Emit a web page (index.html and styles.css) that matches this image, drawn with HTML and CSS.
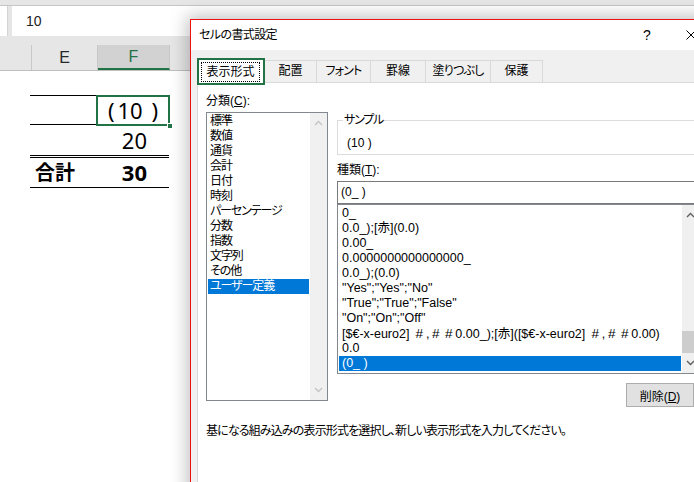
FILE: index.html
```html
<!DOCTYPE html>
<html lang="ja">
<head>
<meta charset="utf-8">
<title>セルの書式設定</title>
<link rel="stylesheet" href="styles.css">
</head>
<body>
<div class="app">
  <div class="excel">
    <div class="topband"></div>
    <div class="fbar">
      <div class="namebox"></div>
      <div class="finput">10</div>
    </div>
    <div class="gapband"></div>
    <div class="colheads">
      <div class="colhead col-d"></div>
      <div class="colhead col-e">E</div>
      <div class="colhead col-f">F</div>
      <div class="colhead col-rest"></div>
    </div>
    <div class="sheet">
      <div class="cell cd r1"></div>
      <div class="cell ce r1"></div>
      <div class="cell cf r1 active num"><span class="lp">(</span>10<span class="sp"> </span>)<span class="handle"></span></div>
      <div class="cell cd r2"></div>
      <div class="cell ce r2"></div>
      <div class="cell cf r2 num">20</div>
      <div class="cell cd r3"></div>
      <div class="cell ce r3 label">合計</div>
      <div class="cell cf r3 num bold">30</div>
    </div>
  </div>

  <div class="dialog">
    <div class="titlebar">
      <span class="title">セルの書式設定</span>
      <div class="tb-buttons">
        <span class="tb-btn help">?</span>
        <span class="tb-btn close"><svg width="10" height="10" viewBox="0 0 10 10"><path d="M0.5 0.5 L9.5 9.5 M9.5 0.5 L0.5 9.5" stroke="#000" stroke-width="1" fill="none"/></svg></span>
      </div>
    </div>
    <div class="dlg-body">
      <div class="tabs">
        <div class="tab active t1"><span class="focus">表示形式</span></div>
        <div class="tab t2">配置</div>
        <div class="tab t3">フォント</div>
        <div class="tab t4">罫線</div>
        <div class="tab t5">塗りつぶし</div>
        <div class="tab t6">保護</div>
      </div>
      <div class="panel">
        <div class="top-row">
          <div class="cat-col">
            <div class="lbl">分類(<u>C</u>):</div>
            <div class="listbox cat-list">
              <div class="items">
                <div class="item">標準</div>
                <div class="item">数値</div>
                <div class="item">通貨</div>
                <div class="item">会計</div>
                <div class="item">日付</div>
                <div class="item">時刻</div>
                <div class="item">パーセンテージ</div>
                <div class="item">分数</div>
                <div class="item">指数</div>
                <div class="item">文字列</div>
                <div class="item">その他</div>
                <div class="item selected">ユーザー定義</div>
              </div>
              <div class="vscroll disabled">
                <div class="arrow"><svg width="9" height="6" viewBox="0 0 9 6"><path d="M1 5 L4.5 1.5 L8 5" fill="none" stroke="#c4c4c4" stroke-width="1.4"/></svg></div>
                <div class="track"></div>
                <div class="arrow"><svg width="9" height="6" viewBox="0 0 9 6"><path d="M1 1 L4.5 4.5 L8 1" fill="none" stroke="#c4c4c4" stroke-width="1.4"/></svg></div>
              </div>
            </div>
          </div>
          <div class="fmt-col">
            <fieldset class="sample-box">
              <legend>サンプル</legend>
              <div class="sample">(10 )</div>
            </fieldset>
            <div class="lbl type-lbl">種類(<u>T</u>):</div>
            <div class="textbox">(0_ )</div>
            <div class="listbox type-list">
              <div class="items">
                <div class="item">0_</div>
                <div class="item">0.0_);[赤](0.0)</div>
                <div class="item">0.00_</div>
                <div class="item">0.0000000000000000_</div>
                <div class="item">0.0_);(0.0)</div>
                <div class="item">"Yes";"Yes";"No"</div>
                <div class="item">"True";"True";"False"</div>
                <div class="item">"On";"On";"Off"</div>
                <div class="item">[$€-x-euro2] <span class="h">#</span>,<span class="h">#</span><span class="h">#</span>0.00_);[赤]([$€-x-euro2] <span class="h">#</span>,<span class="h">#</span><span class="h">#</span>0.00)</div>
                <div class="item">0.0</div>
                <div class="item selected">(0_ )</div>
              </div>
              <div class="vscroll">
                <div class="arrow"><svg width="9" height="6" viewBox="0 0 9 6"><path d="M1 5 L4.5 1.5 L8 5" fill="none" stroke="#606060" stroke-width="1.4"/></svg></div>
                <div class="track"><div class="thumb"></div></div>
                <div class="arrow"><svg width="9" height="6" viewBox="0 0 9 6"><path d="M1 1 L4.5 4.5 L8 1" fill="none" stroke="#606060" stroke-width="1.4"/></svg></div>
              </div>
            </div>
            <button class="btn">削除(<u>D</u>)</button>
          </div>
        </div>
        <div class="desc">基になる組み込みの表示形式を選択し、新しい表示形式を入力してください。</div>
      </div>
    </div>
  </div>
</div>
</body>
</html>
```

FILE: styles.css
```css
* { box-sizing: border-box; }
html, body { margin: 0; padding: 0; }
body {
  width: 694px;
  height: 482px;
  overflow: hidden;
  background: #fff;
  color: #000;
  font-family: "Liberation Sans", "Noto Sans CJK JP", sans-serif;
}
.app { position: relative; width: 694px; height: 482px; overflow: hidden; }

/* ---------- Excel background ---------- */
.topband { height: 6px; background: #e6e6e6; border-bottom: 1px solid #c6c6c6; }
.fbar { display: flex; height: 30px; background: #e6e6e6; }
.namebox { width: 8px; background: #fff; border-right: 1px solid #d4d4d4; }
.finput {
  flex: 1;
  margin-left: 4px;
  background: #fff;
  padding-left: 14px;
  font: 14px/30px "Liberation Sans", sans-serif;
  color: #222;
}
.gapband { height: 9px; background: #e6e6e6; }
.colheads {
  display: flex;
  height: 26px;
  background: #e6e6e6;
  border-bottom: 1px solid #bfbfbf;
}
.colhead {
  font: 16px/25px "Liberation Sans", sans-serif;
  text-align: center;
  color: #262626;
  border-right: 1px solid #c8c8c8;
}
.col-d { width: 32px; }
.col-e { width: 66px; }
.col-f {
  width: 72px;
  background: #d2d2d2;
  color: #217346;
  border-bottom: 2px solid #217346;
  line-height: 23px;
}
.col-rest { flex: 1; border-right: none; }

.sheet {
  display: grid;
  grid-template-columns: 30px 67px 72px;
  padding-top: 24px;
}
.cell {
  font-family: "Noto Sans", sans-serif;
  font-size: 22px;
  white-space: pre;
}
.r1 { height: 29px; line-height: 28px; }
.r2 { height: 34px; line-height: 30px; }
.r3 { height: 30px; line-height: 28px; }
.ce.r1, .cf.r1 { border-top: 1px solid #000; }
.ce.r2, .cf.r2 { border-top: 1px solid #000; border-bottom: 3px double #000; }
.ce.r3, .cf.r3 { border-bottom: 1px solid #000; }
.num { text-align: right; padding-right: 22px; }
.cf.r1 { padding-right: 11px; }
.lp { margin-right: 3px; }
.sp { margin-right: 3px; }
.bold { font-weight: 700; }
.label {
  font-family: "Noto Sans CJK JP", sans-serif;
  font-weight: 700;
  font-size: 20px;
  padding-left: 5px;
}
.active { position: relative; }
.active::after {
  content: "";
  position: absolute;
  top: -1px; left: -1px; right: -1px; bottom: -2px;
  border: 2px solid #217346;
}
.handle {
  position: absolute;
  right: -4px;
  bottom: -5px;
  width: 6px;
  height: 6px;
  background: #217346;
  border: 1px solid #fff;
  z-index: 1;
}

/* ---------- Dialog ---------- */
.dialog {
  position: absolute;
  left: 190px;
  top: 19px;
  width: 540px;
  height: 480px;
  border: 1px solid #ee1111;
  background: #f0f0f0;
  box-shadow: 0 0 16px 3px rgba(0, 0, 0, 0.25);
  font-family: "Liberation Sans", "Noto Sans CJK JP", sans-serif;
  font-size: 12px;
  font-feature-settings: "palt";
}
.titlebar {
  display: flex;
  align-items: center;
  height: 30px;
  background: #fff;
  padding-left: 8px;
}
.title { line-height: 16px; letter-spacing: -0.6px; }
.tb-buttons { display: flex; margin-left: auto; margin-right: 16px; }
.tb-btn {
  width: 44px;
  height: 30px;
  display: flex;
  align-items: center;
  justify-content: center;
}
.help { font-size: 14px; }

.dlg-body { padding: 8px 0 0 6px; }
.tabs {
  display: flex;
  align-items: flex-end;
  height: 25px;
  position: relative;
  z-index: 1;
}
.tab {
  height: 22px;
  margin-bottom: 1px;
  margin-left: -1px;
  border: 1px solid #d9d9d9;
  border-bottom: none;
  background: #f0f0f0;
  text-align: center;
  line-height: 21px;
}
.tab.active {
  height: 25px;
  margin-bottom: 0;
  margin-left: 0;
  background: #fff;
  position: relative;
  z-index: 2;
}
.focus {
  display: block;
  margin: 3px 4px 1px 3px;
  height: 20px;
  line-height: 18px;
  border: 1px dotted #000;
}
.t1 { width: 68px; }
.t2 { width: 53px; }
.t3 { width: 55px; letter-spacing: -0.8px; }
.t4 { width: 56px; }
.t5 { width: 66px; letter-spacing: -0.8px; }
.t6 { width: 53px; }

.panel {
  position: relative;
  margin-top: -1px;
  height: 420px;
  background: #fff;
  border: 1px solid #d9d9d9;
  padding: 10px 0 0 8px;
}
.top-row { display: flex; align-items: flex-start; }
.lbl { line-height: 16px; height: 16px; }
.cat-col { width: 122px; }
.listbox {
  display: flex;
  border: 1px solid #828790;
  background: #fff;
}
.cat-list { margin-top: 3px; height: 289px; }
.cat-list .item { letter-spacing: -1.1px; }
.items { flex: 1; padding: 1px; min-width: 0; }
.item {
  height: 15px;
  line-height: 15px;
  padding-left: 2px;
  white-space: pre;
  overflow: hidden;
}
.item.selected { background: #0078d7; color: #fff; }
.vscroll {
  width: 17px;
  display: flex;
  flex-direction: column;
  background: #f0f0f0;
}
.arrow {
  height: 20px;
  display: flex;
  align-items: center;
  justify-content: center;
}
.track { flex: 1; }
.thumb { margin-top: 106px; height: 22px; background: #cdcdcd; }

.fmt-col {
  width: 363px;
  margin-left: 9px;
  display: flex;
  flex-direction: column;
}
.sample-box {
  margin: 19px 0 0 0;
  padding: 0 0 0 5px;
  border: 1px solid #dcdcdc;
}
.sample-box legend { padding: 0 1px; line-height: 16px; letter-spacing: -1.2px; }
.sample { padding: 7px 0 3px 4px; line-height: 16px; }
.type-lbl { margin-top: 7px; }
.textbox {
  margin-top: 3px;
  height: 23px;
  border: 1px solid #7a7a7a;
  padding-left: 3px;
  line-height: 21px;
}
.type-list { height: 170px; font-size: 12.5px; }
.type-list .item { padding-left: 3px; }
.h { display: inline-block; width: 13px; text-align: center; font-size: 13.5px; line-height: 15px; }
.btn {
  align-self: flex-end;
  margin: 9px 6px 0 0;
  width: 68px;
  height: 24px;
  padding: 0;
  background: #e1e1e1;
  border: 1px solid #adadad;
  font: inherit;
  font-feature-settings: "palt";
  color: #000;
}
.desc { margin-top: 16px; line-height: 16px; letter-spacing: -0.85px; }
```
